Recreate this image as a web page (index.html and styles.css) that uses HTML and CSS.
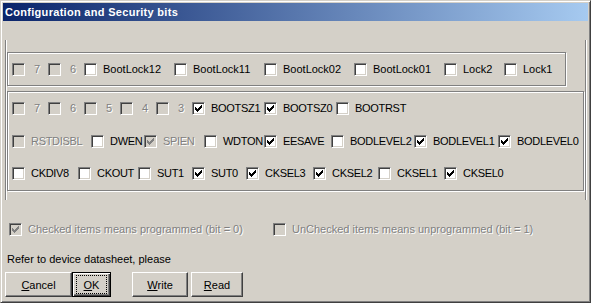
FILE: index.html
```html
<!DOCTYPE html>
<html lang="en">
<head>
    <meta charset="UTF-8">
    <title>Configuration and Security bits</title>
    <link rel="stylesheet" href="styles.css">
</head>
<body>
    <div class="window">
        <div class="titlebar">Configuration and Security bits</div>

        <div class="client">
            <div class="frame">
                <!-- lock bits -->
                <div class="group group-lock">
                    <div class="bits">
                        <div class="bit w36 off"><span class="box"></span><span class="name num">7</span></div>
                        <div class="bit w36 off"><span class="box"></span><span class="name num">6</span></div>
                        <div class="bit w90"><span class="box"></span><span class="name">BootLock12</span></div>
                        <div class="bit w90"><span class="box"></span><span class="name">BootLock11</span></div>
                        <div class="bit w90"><span class="box"></span><span class="name">BootLock02</span></div>
                        <div class="bit w90"><span class="box"></span><span class="name">BootLock01</span></div>
                        <div class="bit w60"><span class="box"></span><span class="name">Lock2</span></div>
                        <div class="bit w60"><span class="box"></span><span class="name">Lock1</span></div>
                    </div>
                </div>

                <!-- fuse bits -->
                <div class="group group-fuse">
                    <div class="bits">
                        <div class="bit w36 off"><span class="box"></span><span class="name num">7</span></div>
                        <div class="bit w36 off"><span class="box"></span><span class="name num">6</span></div>
                        <div class="bit w36 off"><span class="box"></span><span class="name num">5</span></div>
                        <div class="bit w36 off"><span class="box"></span><span class="name num">4</span></div>
                        <div class="bit w36 off"><span class="box"></span><span class="name num">3</span></div>
                        <div class="bit w72"><span class="box"><svg class="tick" viewBox="0 0 7 7"><path d="M0 2h1v3H0zM1 3h1v3H1zM2 4h1v3H2zM3 3h1v3H3zM4 2h1v3H4zM5 1h1v3H5zM6 0h1v3H6z"/></svg></span><span class="name">BOOTSZ1</span></div>
                        <div class="bit w72"><span class="box"><svg class="tick" viewBox="0 0 7 7"><path d="M0 2h1v3H0zM1 3h1v3H1zM2 4h1v3H2zM3 3h1v3H3zM4 2h1v3H4zM5 1h1v3H5zM6 0h1v3H6z"/></svg></span><span class="name">BOOTSZ0</span></div>
                        <div class="bit w90"><span class="box"></span><span class="name">BOOTRST</span></div>
                    </div>
                    <div class="bits">
                        <div class="bit w79 off"><span class="box"></span><span class="name">RSTDISBL</span></div>
                        <div class="bit w53"><span class="box"></span><span class="name">DWEN</span></div>
                        <div class="bit w60 off"><span class="box"><svg class="tick" viewBox="0 0 7 7"><path d="M0 2h1v3H0zM1 3h1v3H1zM2 4h1v3H2zM3 3h1v3H3zM4 2h1v3H4zM5 1h1v3H5zM6 0h1v3H6z"/></svg></span><span class="name">SPIEN</span></div>
                        <div class="bit w60"><span class="box"></span><span class="name">WDTON</span></div>
                        <div class="bit w67"><span class="box"><svg class="tick" viewBox="0 0 7 7"><path d="M0 2h1v3H0zM1 3h1v3H1zM2 4h1v3H2zM3 3h1v3H3zM4 2h1v3H4zM5 1h1v3H5zM6 0h1v3H6z"/></svg></span><span class="name">EESAVE</span></div>
                        <div class="bit w83"><span class="box"></span><span class="name">BODLEVEL2</span></div>
                        <div class="bit w84"><span class="box"><svg class="tick" viewBox="0 0 7 7"><path d="M0 2h1v3H0zM1 3h1v3H1zM2 4h1v3H2zM3 3h1v3H3zM4 2h1v3H4zM5 1h1v3H5zM6 0h1v3H6z"/></svg></span><span class="name">BODLEVEL1</span></div>
                        <div class="bit w84"><span class="box"><svg class="tick" viewBox="0 0 7 7"><path d="M0 2h1v3H0zM1 3h1v3H1zM2 4h1v3H2zM3 3h1v3H3zM4 2h1v3H4zM5 1h1v3H5zM6 0h1v3H6z"/></svg></span><span class="name">BODLEVEL0</span></div>
                    </div>
                    <div class="bits">
                        <div class="bit w66"><span class="box"></span><span class="name">CKDIV8</span></div>
                        <div class="bit w60"><span class="box"></span><span class="name">CKOUT</span></div>
                        <div class="bit w54"><span class="box"></span><span class="name">SUT1</span></div>
                        <div class="bit w54"><span class="box"><svg class="tick" viewBox="0 0 7 7"><path d="M0 2h1v3H0zM1 3h1v3H1zM2 4h1v3H2zM3 3h1v3H3zM4 2h1v3H4zM5 1h1v3H5zM6 0h1v3H6z"/></svg></span><span class="name">SUT0</span></div>
                        <div class="bit w67"><span class="box"><svg class="tick" viewBox="0 0 7 7"><path d="M0 2h1v3H0zM1 3h1v3H1zM2 4h1v3H2zM3 3h1v3H3zM4 2h1v3H4zM5 1h1v3H5zM6 0h1v3H6z"/></svg></span><span class="name">CKSEL3</span></div>
                        <div class="bit w65"><span class="box"><svg class="tick" viewBox="0 0 7 7"><path d="M0 2h1v3H0zM1 3h1v3H1zM2 4h1v3H2zM3 3h1v3H3zM4 2h1v3H4zM5 1h1v3H5zM6 0h1v3H6z"/></svg></span><span class="name">CKSEL2</span></div>
                        <div class="bit w66"><span class="box"></span><span class="name">CKSEL1</span></div>
                        <div class="bit w66"><span class="box"><svg class="tick" viewBox="0 0 7 7"><path d="M0 2h1v3H0zM1 3h1v3H1zM2 4h1v3H2zM3 3h1v3H3zM4 2h1v3H4zM5 1h1v3H5zM6 0h1v3H6z"/></svg></span><span class="name">CKSEL0</span></div>
                    </div>
                </div>
            </div>

            <div class="legend">
                <div class="bit w264 off"><span class="box"><svg class="tick" viewBox="0 0 7 7"><path d="M0 2h1v3H0zM1 3h1v3H1zM2 4h1v3H2zM3 3h1v3H3zM4 2h1v3H4zM5 1h1v3H5zM6 0h1v3H6z"/></svg></span><span class="name">Checked items means programmed (bit = 0)</span></div>
                <div class="bit off"><span class="box"></span><span class="name">UnChecked items means unprogrammed (bit = 1)</span></div>
            </div>

            <p class="note">Refer to device datasheet, please</p>

            <div class="buttons">
                <button class="btn btn-cancel"><u>C</u>ancel</button>
                <button class="btn btn-ok default"><span class="focus"><u>O</u>K</span></button>
                <button class="btn btn-write"><u>W</u>rite</button>
                <button class="btn btn-read"><u>R</u>ead</button>
            </div>
        </div>
    </div>
</body>
</html>
```

FILE: styles.css
```css
* {
    padding: 0;
    margin: 0;
    box-sizing: border-box;
}

body {
    background-color: #d4d0c8;
    font-family: "Liberation Sans", Arial, sans-serif;
    font-size: 11px;
    color: #000;
}

.window {
    width: 591px;
    height: 303px;
    padding: 2px;
    border: 1px solid;
    border-color: #d4d0c8 #404040 #404040 #d4d0c8;
    box-shadow: inset 1px 1px #fff, inset -1px -1px #808080;
}

.titlebar {
    height: 18px;
    line-height: 18px;
    padding-left: 2px;
    background: linear-gradient(to right, #0a246a, #a6caf0);
    color: #fff;
    font-weight: bold;
    letter-spacing: 0.3px;
}

/* outer frame round the two groups */
.frame {
    margin: 19px 0 0 2px;
    width: 582px;
    padding: 12px 0 9px 1px;
    border-left: 1px solid #808080;
    border-right: 1px solid #fff;
    box-shadow: inset 1px 0 #fff, inset -1px 0 #808080;
}

.group {
    border: 1px solid #808080;
    box-shadow: inset 1px 1px #fff, 1px 1px #fff;
    padding: 10px 0 0 4px;
}

.group-lock {
    width: 559px;
    height: 34px;
}

.group-fuse {
    width: 577px;
    height: 100px;
    margin-top: 5px;
}

.group-fuse .name {
    letter-spacing: -0.3px;
}

.bits {
    display: flex;
    height: 13px;
}

.group-fuse .bits:nth-child(2) {
    margin-top: 20px;
}

.group-fuse .bits:nth-child(3) {
    margin-top: 19px;
}

.bit {
    display: flex;
    align-items: center;
    height: 13px;
    flex-shrink: 0;
    overflow: hidden;
    white-space: nowrap;
}

.w36 { width: 36px; }
.w53 { width: 53px; }
.w54 { width: 54px; }
.w60 { width: 60px; }
.w65 { width: 65px; }
.w66 { width: 66px; }
.w67 { width: 67px; }
.w72 { width: 72px; }
.w79 { width: 79px; }
.w83 { width: 83px; }
.w84 { width: 84px; }
.w90 { width: 90px; }
.w264 { width: 264px; }

.box {
    display: flex;
    align-items: center;
    justify-content: center;
    width: 13px;
    height: 13px;
    flex-shrink: 0;
    background-color: #fff;
    border: 1px solid;
    border-color: #808080 #fff #fff #808080;
    box-shadow: inset 1px 1px #404040, inset -1px -1px #d4d0c8;
}

.tick {
    width: 7px;
    height: 7px;
    fill: #000;
    shape-rendering: crispEdges;
}

.name {
    margin-left: 6px;
    line-height: 13px;
}

.num {
    padding-left: 3px;
}

.off .box {
    background-color: #d4d0c8;
}

.off .tick {
    fill: #808080;
}

.off .name {
    color: #808080;
    text-shadow: 1px 1px 0 #fff;
}

.legend {
    display: flex;
    margin: 23px 0 0 6px;
}

.note {
    margin: 17px 0 0 4px;
    line-height: 13px;
}

.buttons {
    display: flex;
    margin: 6px 0 0 2px;
}

.btn {
    height: 25px;
    font-family: "Liberation Sans", Arial, sans-serif;
    font-size: 11px;
    color: #000;
    background-color: #d4d0c8;
    border: 1px solid;
    border-color: #fff #404040 #404040 #fff;
    box-shadow: inset -1px -1px #808080;
    display: flex;
    align-items: center;
    justify-content: center;
}

.btn-cancel { width: 67px; }
.btn-ok { width: 39px; }
.btn-write { width: 56px; margin-left: 21px; }
.btn-read { width: 52px; margin-left: 3px; }

.default {
    border: 1px solid #000;
    box-shadow: inset 1px 1px #fff, inset -1px -1px #404040, inset -2px -2px #808080;
}

.focus {
    display: flex;
    align-items: center;
    justify-content: center;
    width: 31px;
    height: 19px;
    outline: 1px dotted #000;
    outline-offset: -1px;
}
```
